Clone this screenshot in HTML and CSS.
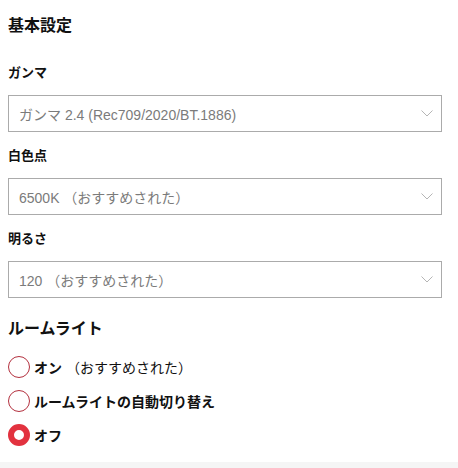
FILE: index.html
```html
<!DOCTYPE html>
<html lang="ja">
<head>
<meta charset="utf-8">
<link rel="stylesheet" href="styles.css">
</head>
<body>
<main class="page">
  <h2 class="section-title">基本設定</h2>

  <div class="field">
    <div class="field-label">ガンマ</div>
    <div class="select">
      <span class="select-value">ガンマ 2.4 (Rec709/2020/BT.1886)</span>
      <svg class="chevron" width="12" height="7" viewBox="0 0 12 7"><polyline points="0.5,0.5 6,6 11.5,0.5" fill="none" stroke="#b5b5b5" stroke-width="1"/></svg>
    </div>
  </div>

  <div class="field">
    <div class="field-label">白色点</div>
    <div class="select">
      <span class="select-value">6500K （おすすめされた）</span>
      <svg class="chevron" width="12" height="7" viewBox="0 0 12 7"><polyline points="0.5,0.5 6,6 11.5,0.5" fill="none" stroke="#b5b5b5" stroke-width="1"/></svg>
    </div>
  </div>

  <div class="field">
    <div class="field-label">明るさ</div>
    <div class="select">
      <span class="select-value">120 （おすすめされた）</span>
      <svg class="chevron" width="12" height="7" viewBox="0 0 12 7"><polyline points="0.5,0.5 6,6 11.5,0.5" fill="none" stroke="#b5b5b5" stroke-width="1"/></svg>
    </div>
  </div>

  <h2 class="section-title room">ルームライト</h2>

  <div class="radios">
    <label class="radio-row"><input type="radio" name="room"><span class="radio-text"><b>オン</b><span class="note">（おすすめされた）</span></span></label>
    <label class="radio-row"><input type="radio" name="room"><span class="radio-text"><b>ルームライトの自動切り替え</b></span></label>
    <label class="radio-row"><input type="radio" name="room" checked><span class="radio-text"><b>オフ</b></span></label>
  </div>
</main>
<div class="footer-strip"></div>
</body>
</html>
```

FILE: styles.css
```css
html, body {
  margin: 0;
  padding: 0;
  background: #ffffff;
}
body {
  font-family: "Liberation Sans", "Noto Sans CJK JP", sans-serif;
  color: #111;
  height: 468px;
  display: flex;
  flex-direction: column;
}
.page {
  padding: 16px 16px 0 8px;
  flex: 1;
}
.section-title {
  margin: 0;
  font-size: 16px;
  line-height: 20px;
  font-weight: bold;
  color: #111;
}
.section-title.room {
  margin-top: 21px;
}
.field {
  display: flex;
  flex-direction: column;
}
.field:first-of-type {
  margin-top: 28px;
}
.field + .field {
  margin-top: 15px;
}
.field-label {
  font-size: 13px;
  line-height: 18px;
  font-weight: bold;
  color: #111;
}
.select {
  margin-top: 13px;
  height: 37px;
  box-sizing: border-box;
  border: 1px solid #ababab;
  display: flex;
  align-items: center;
  justify-content: space-between;
  padding: 0 8px 0 10px;
}
.select-value {
  font-size: 14px;
  color: #7b7b7b;
}
.chevron {
  display: block;
}
.radios {
  margin-top: 11px;
  display: flex;
  flex-direction: column;
}
.radio-row {
  height: 34px;
  display: flex;
  align-items: center;
  gap: 4px;
}
.radio-row input {
  appearance: none;
  -webkit-appearance: none;
  margin: 0;
  width: 22px;
  height: 22px;
  box-sizing: border-box;
  border: 1px solid #b3303e;
  border-radius: 50%;
  background: #fff;
}
.radio-row input:checked {
  border: 6px solid #e2323f;
}
.radio-text {
  font-size: 14px;
  color: #111;
}
.radio-text b {
  font-size: 14px;
  font-weight: bold;
}
.note {
  margin-left: 4px;
}
.footer-strip {
  height: 6px;
  background: #f5f5f5;
}
```
